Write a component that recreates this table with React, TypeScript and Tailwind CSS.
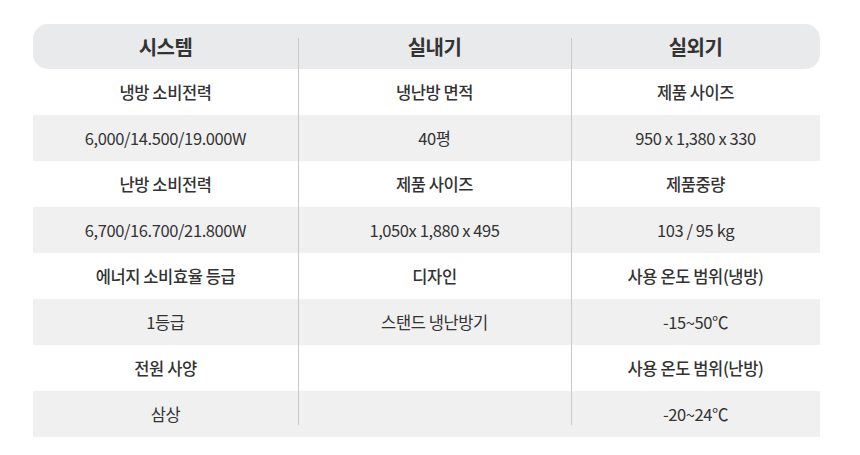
import React from "react"

const rows: { text: string[]; label: boolean }[] = [
  { text: ["냉방 소비전력", "냉난방 면적", "제품 사이즈"], label: true },
  { text: ["6,000/14.500/19.000W", "40평", "950 x 1,380 x 330"], label: false },
  { text: ["난방 소비전력", "제품 사이즈", "제품중량"], label: true },
  { text: ["6,700/16.700/21.800W", "1,050x 1,880 x 495", "103 / 95 kg"], label: false },
  { text: ["에너지 소비효율 등급", "디자인", "사용 온도 범위(냉방)"], label: true },
  { text: ["1등급", "스탠드 냉난방기", "-15~50℃"], label: false },
  { text: ["전원 사양", "", "사용 온도 범위(난방)"], label: true },
  { text: ["삼상", "", "-20~24℃"], label: false },
]

const cols = "grid grid-cols-[265px_273px_249px]"

export default function App() {
  return (
    <div
      className="w-[860px] h-[455px] bg-white pt-[24px] pl-[33px] text-[#333]"
      style={{ fontFamily: '"Noto Sans CJK KR", "Noto Sans", sans-serif' }}
    >
      <div className="w-[787px]">
        {/* 헤더 */}
        <div className={`${cols} h-[45px] rounded-[15px] bg-[#e9eaec] text-[20px] font-bold tracking-[-0.5px]`}>
          {["시스템", "실내기", "실외기"].map((h, i) => (
            <div
              key={h}
              className={`relative flex items-center justify-center ${
                i > 0 ? "before:absolute before:left-0 before:top-[14px] before:bottom-0 before:w-px before:bg-[#c9c9c9]" : ""
              }`}
            >
              {h}
            </div>
          ))}
        </div>

        {/* 본문 */}
        {rows.map((row, r) => (
          <div
            key={r}
            className={`${cols} h-[46px] ${row.label ? "bg-white font-medium" : "bg-[#f0f0f0] font-normal"} text-[16.5px] tracking-[-0.4px]`}
          >
            {row.text.map((t, i) => (
              <div
                key={i}
                className={`relative flex items-center justify-center ${
                  i > 0
                    ? r === rows.length - 1
                      ? "before:absolute before:left-0 before:top-0 before:bottom-[12px] before:w-px before:bg-[#c9c9c9]"
                      : "before:absolute before:left-0 before:top-0 before:bottom-0 before:w-px before:bg-[#c9c9c9]"
                    : ""
                }`}
              >
                {t}
              </div>
            ))}
          </div>
        ))}
      </div>
    </div>
  )
}
